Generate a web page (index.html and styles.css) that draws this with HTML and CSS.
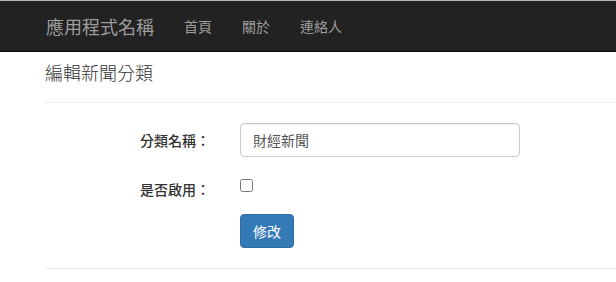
FILE: index.html
```html
<!DOCTYPE html>
<html lang="zh-Hant">
<head>
<meta charset="utf-8">
<title>編輯新聞分類</title>
<link rel="stylesheet" href="styles.css">
</head>
<body>
<nav class="navbar">
  <div class="navbar-inner">
    <a class="brand" href="#">應用程式名稱</a>
    <ul class="nav">
      <li><a href="#">首頁</a></li>
      <li><a href="#">關於</a></li>
      <li><a href="#">連絡人</a></li>
    </ul>
  </div>
</nav>
<main class="content">
  <h4 class="title">編輯新聞分類</h4>
  <hr class="rule">
  <form class="form">
    <div class="form-group">
      <label class="form-label" for="name">分類名稱：</label>
      <div class="form-control-col">
        <input class="text-input" id="name" type="text" value="財經新聞">
      </div>
    </div>
    <div class="form-group form-group-check">
      <label class="form-label" for="enabled">是否啟用：</label>
      <div class="form-control-col">
        <input class="check" id="enabled" type="checkbox">
      </div>
    </div>
    <div class="form-group">
      <span class="form-label"></span>
      <div class="form-control-col">
        <button class="btn" type="button">修改</button>
      </div>
    </div>
  </form>
  <hr class="rule rule-bottom">
</main>
</body>
</html>
```

FILE: styles.css
```css
* { box-sizing: border-box; }
html, body {
  margin: 0;
  padding: 0;
  background: #fff;
}
body {
  font-family: "Noto Sans CJK TC", "Liberation Sans", sans-serif;
  font-size: 14px;
  line-height: 20px;
  color: #333;
  overflow: hidden;
}
.navbar {
  margin-top: 0;
  border-top: 1px solid #b4b4b4;
  background: #222;
  border-bottom: 1px solid #080808;
  height: 52px;
}
.navbar-inner {
  display: flex;
  align-items: center;
  height: 50px;
  padding-left: 31px;
}
.brand {
  display: block;
  padding: 15px;
  font-size: 18px;
  line-height: 20px;
  color: #9d9d9d;
  text-decoration: none;
}
.nav {
  display: flex;
  list-style: none;
  margin: 0;
  padding: 0;
}
.nav a {
  display: block;
  padding: 15px;
  line-height: 20px;
  font-size: 14px;
  color: #9d9d9d;
  text-decoration: none;
}
.content {
  padding-left: 45px;
}
.title {
  margin: 10px 0 0 0;
  font-size: 18px;
  line-height: 20px;
  font-weight: 300;
  color: #333;
}
.rule {
  margin: 20px 0 20px 0;
  border: 0;
  border-top: 1px solid #eee;
  height: 0;
}
.form-group {
  display: grid;
  grid-template-columns: 180px 1fr;
  margin-bottom: 15px;
  min-height: 27px;
}
.form-label {
  text-align: right;
  padding-right: 15px;
  padding-top: 7px;
  font-weight: 500;
  line-height: 20px;
  color: #333;
}
.form-control-col {
  padding-left: 15px;
}
.text-input {
  display: block;
  width: 280px;
  height: 34px;
  padding: 6px 12px;
  font-family: inherit;
  font-size: 14px;
  line-height: 20px;
  color: #555;
  background: #fff;
  border: 1px solid #ccc;
  border-radius: 4px;
  box-shadow: inset 0 1px 1px rgba(0,0,0,0.075);
  outline: none;
}
.form-group-check .form-control-col {
  padding-top: 7px;
}
.check {
  display: block;
  width: 13px;
  height: 13px;
  margin: 0;
}
.btn {
  display: block;
  height: 34px;
  padding: 6px 12px;
  font-family: inherit;
  font-size: 14px;
  line-height: 20px;
  color: #fff;
  background: #337ab7;
  border: 1px solid #2e6da4;
  border-radius: 4px;
  cursor: pointer;
}
.rule-bottom {
  margin-top: 20px;
}
```
